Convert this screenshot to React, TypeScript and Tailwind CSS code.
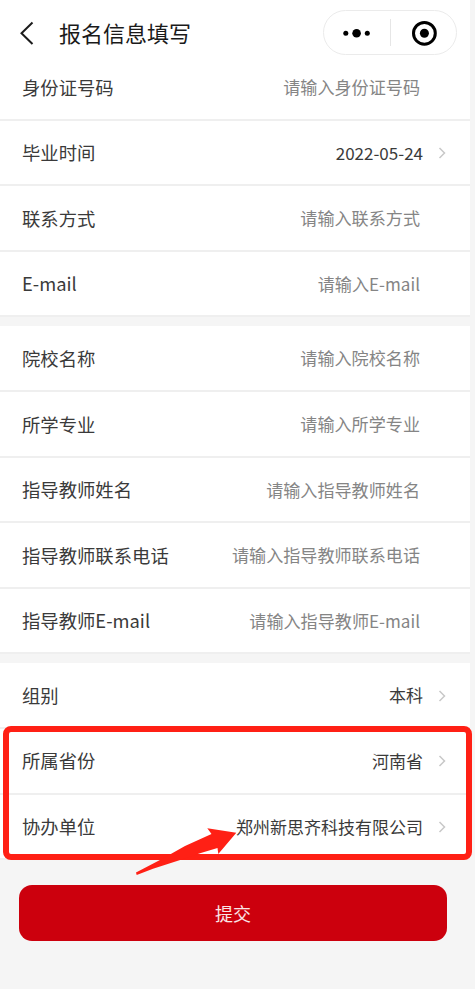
import React from "react";

interface Field {
  label: string;
  placeholder?: string;
  value?: string;
}

const personalFields: Field[] = [
  { label: "身份证号码", placeholder: "请输入身份证号码" },
  { label: "毕业时间", value: "2022-05-24" },
  { label: "联系方式", placeholder: "请输入联系方式" },
  { label: "E-mail", placeholder: "请输入E-mail" },
];

const schoolFields: Field[] = [
  { label: "院校名称", placeholder: "请输入院校名称" },
  { label: "所学专业", placeholder: "请输入所学专业" },
  { label: "指导教师姓名", placeholder: "请输入指导教师姓名" },
  { label: "指导教师联系电话", placeholder: "请输入指导教师联系电话" },
  { label: "指导教师E-mail", placeholder: "请输入指导教师E-mail" },
];

const groupFields: Field[] = [{ label: "组别", value: "本科" }];

const regionFields: Field[] = [
  { label: "所属省份", value: "河南省" },
  { label: "协办单位", value: "郑州新思齐科技有限公司" },
];

const Header = () => (
  <header className="flex h-[55px] items-end bg-white pl-[19px] pr-[13px]">
    <div className="flex h-[45px] flex-1 items-center">
      <svg width="16" height="26" viewBox="0 0 16 26" fill="none" stroke="#1c1c1c" strokeWidth="2">
        <path d="M13.5 2.5 2.5 13.2 13.5 24" />
      </svg>
      <h1 className="mb-[2px] ml-6 text-[22px] leading-none text-[#1a1a1a]">报名信息填写</h1>
    </div>
    {/* Mini program capsule */}
    <div className="flex h-[45px] w-[134px] items-center rounded-full border border-[#ebebeb]">
      <svg className="w-[66px]" height="26" viewBox="0 0 66 26" fill="#000">
        <circle cx="21.8" cy="13.3" r="2.5" />
        <circle cx="32.6" cy="13.3" r="4.3" />
        <circle cx="43.3" cy="13.3" r="2.5" />
      </svg>
      <div className="h-[27px] w-px bg-[#e6e6e6]" />
      <svg className="w-[65px]" height="28" viewBox="0 0 65 28" fill="none">
        <circle cx="33.4" cy="14.3" r="10.9" stroke="#000" strokeWidth="3" />
        <circle cx="33.4" cy="14.3" r="4.5" fill="#000" />
      </svg>
    </div>
  </header>
);

const FieldRow = ({ label, placeholder, value }: Field) => (
  <div className="flex h-[65.6px] items-center justify-between border-b-2 border-[#efefef] pl-[22px] pr-[23px]">
    <span className="pt-px text-[18.35px] text-[#3a3a3a]">{label}</span>
    {value ? (
      <span className="flex items-center text-[17px] text-[#3a3a3a]">
        {value}
        <svg className="ml-[14px] mt-px" width="10" height="14" viewBox="0 0 10 14" fill="none" stroke="#c8c8c8" strokeWidth="1.5">
          <path d="M2.5 2 7.5 7 2.5 12" />
        </svg>
      </span>
    ) : (
      <span className="pr-[27px] text-[17.1px] text-[#858585]">{placeholder}</span>
    )}
  </div>
);

const FieldList = ({ fields }: { fields: Field[] }) => (
  <>
    {fields.map((field) => (
      <FieldRow key={field.label} {...field} />
    ))}
  </>
);

const App = () => {
  return (
    <div className="h-[989px] overflow-hidden bg-[#f5f5f5] font-['Noto_Sans_CJK_SC',sans-serif]">
      <div className="w-[470px]">
        <Header />
        <section className="bg-white">
          <FieldList fields={personalFields} />
        </section>
        <section className="mt-[9px] bg-white">
          <FieldList fields={schoolFields} />
        </section>
        <section className="mt-[9px] bg-white">
          <FieldList fields={groupFields} />
          {/* Highlighted fields */}
          <div className="relative">
            <FieldList fields={regionFields} />
            <div className="absolute -top-[3px] left-[3px] h-[134px] w-[469px] rounded-[8px] border-[6px] border-[#ff2015]" />
            <svg className="absolute left-[130px] top-[91px]" width="112" height="60" viewBox="130 820 112 60" fill="#ff2015">
              <path d="M136 872.5 163.3 858.3 185 846 211.5 834 207.3 828.3 236.3 832.7 218.3 854 217.5 848 200 853.3 181.7 859.5 153 868.7 136.7 875Z" />
            </svg>
          </div>
        </section>
        <button className="ml-[19px] mt-[25px] flex h-[56px] w-[428px] items-center justify-center rounded-[13px] bg-[#cc000d] text-[18px] text-white/90">
          提交
        </button>
      </div>
    </div>
  );
};

export default App;
